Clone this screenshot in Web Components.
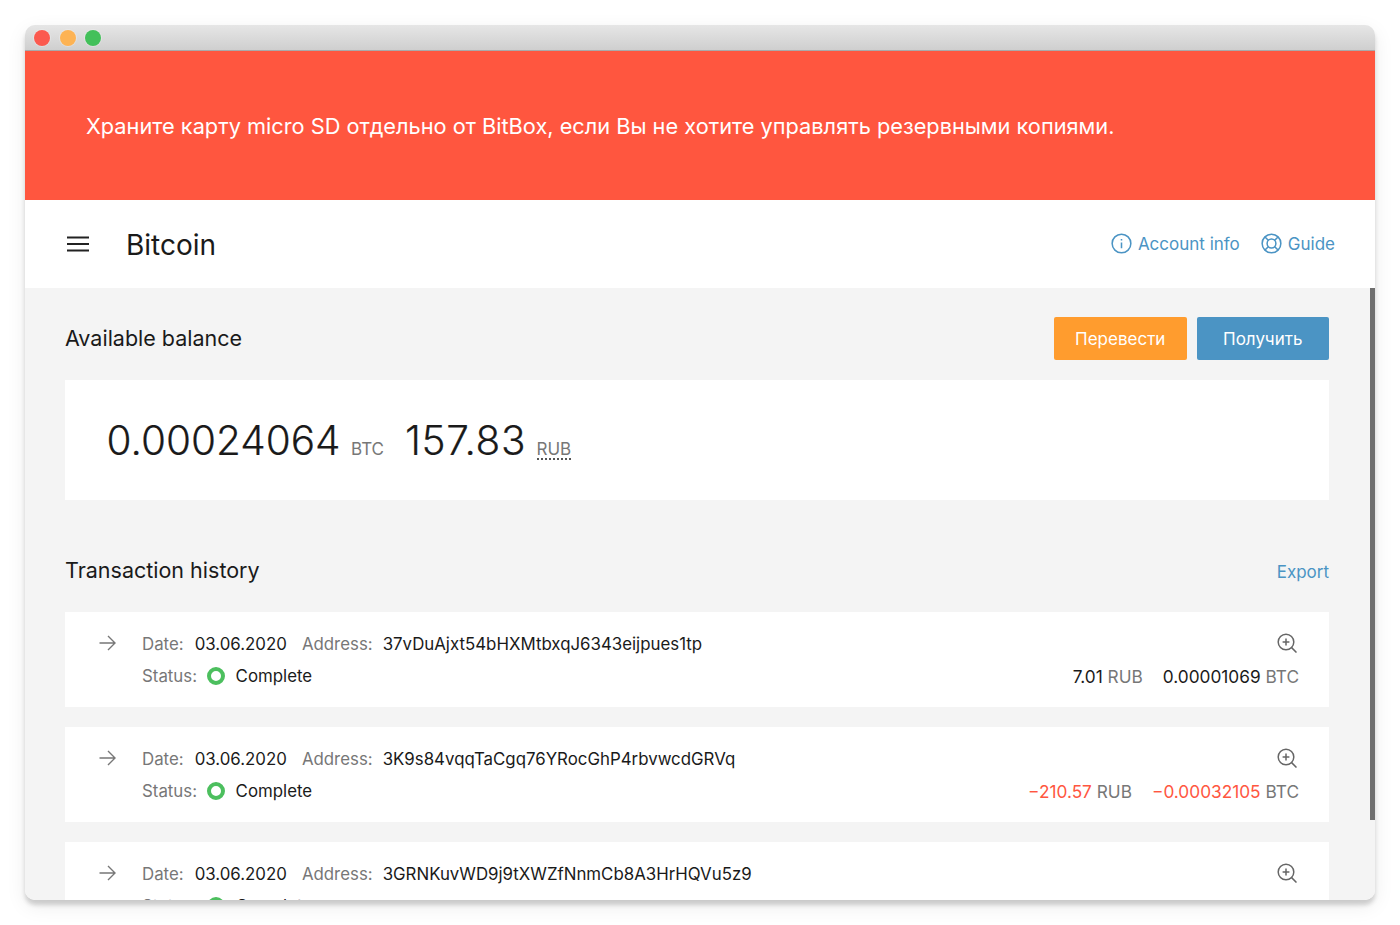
<!DOCTYPE html>
<html lang="ru">
<head>
<meta charset="utf-8">
<title>BitBox</title>
<style>
html, body { margin: 0; background: #fff; }
body { padding: 25px; height: 925px; box-sizing: border-box; overflow: hidden; font-family: Inter, "Liberation Sans", sans-serif; color: #1a1a1a; }
</style>
</head>
<body>
<mac-window>
   <alert-banner>Храните карту micro SD отдельно от BitBox, если Вы не хотите управлять резервными копиями.</alert-banner>
   <account-header title="Bitcoin"></account-header>
   <section-head title="Available balance">
      <action-button color="#ff9c2e">Перевести</action-button>
      <action-button color="#4b94c4">Получить</action-button>
   </section-head>
   <balance-card btc="0.00024064" fiat="157.83"></balance-card>
   <section-head class="history" title="Transaction history">
      <export-link>Export</export-link>
   </section-head>
   <tx-row address="37vDuAjxt54bHXMtbxqJ6343eijpues1tp" fiat="7.01" btc="0.00001069"></tx-row>
   <tx-row address="3K9s84vqqTaCgq76YRocGhP4rbvwcdGRVq" fiat="−210.57" btc="−0.00032105" negative></tx-row>
   <tx-row address="3GRNKuvWD9j9tXWZfNnmCb8A3HrHQVu5z9" fiat="+704.57" btc="+0.00072000"></tx-row>
</mac-window>

<script>
const templateWindow = document.createElement('template')
templateWindow.innerHTML = `
<style>
:host {
   display: block;
   width: 1350px;
   height: 875px;
   border-radius: 10px;
   box-shadow: 0 5px 4px rgb(0 0 0 / 0.16), 0 6px 20px rgb(0 0 0 / 0.08);
}
.frame {
   position: relative;
   height: 100%;
   border-radius: 10px;
   overflow: hidden;
   background: #f4f4f4;
}
.bar {
   height: 25px;
   border-bottom: 1px solid #a9a9a9;
   background: linear-gradient(#e6e6e6, #cfcfcf);
   display: flex;
   align-items: center;
   gap: 9.5px;
   padding: 0 0 0 9px;
}
.bar i { width: 16px; height: 16px; border-radius: 50%; box-shadow: 0 0 0 1px rgb(255 255 255 / 0.25); }
.scroll {
   position: absolute;
   top: 263px;
   right: 0;
   width: 5px;
   height: 532px;
   background: #6f6f6f;
}
</style>
<div class="frame">
   <div class="bar">
      <i style="background:#fb5a4f"></i>
      <i style="background:#fdb354"></i>
      <i style="background:#43c05a"></i>
   </div>
   <slot></slot>
   <div class="scroll"></div>
</div>
`

class MacWindow extends HTMLElement {
   constructor() {
      super()
      this.attachShadow({ mode: 'open' })
      this.shadowRoot.appendChild(templateWindow.content.cloneNode(true))
   }
}

class AlertBanner extends HTMLElement {
   constructor() {
      super()
      this.attachShadow({ mode: 'open' })
      this.shadowRoot.innerHTML = `
      <style>
      :host {
         display: flex;
         align-items: center;
         height: 149px;
         padding: 0 61px;
         background: #ff563f;
         color: #fff;
         font-size: 21.75px;
      }
      </style>
      <slot></slot>`
   }
}

class AccountHeader extends HTMLElement {
   constructor() {
      super()
      this.attachShadow({ mode: 'open' })
      this.shadowRoot.innerHTML = `
      <style>
      :host {
         display: flex;
         align-items: center;
         height: 88px;
         padding: 0 40px 1px 42px;
         box-sizing: border-box;
         background: #fff;
      }
      .menu { width: 22px; height: 16px; margin-right: 37px; display: block; }
      h1 { margin: 0 0 -2px; font-size: 28px; font-weight: 400; flex: 1; color: #1a1a1a; }
      a {
         display: flex;
         align-items: center;
         gap: 6px;
         margin-left: 21px;
         color: #4b94c4;
         font-size: 17px;
      }
      svg.ic { width: 21px; height: 21px; fill: none; stroke: #4b94c4; stroke-width: 1.6; }
      </style>
      <svg class="menu" viewBox="0 0 22 16"><path d="M0 1.5h22M0 8h22M0 14.5h22" stroke="#222" stroke-width="2"/></svg>
      <h1>${this.getAttribute('title')}</h1>
      <a>
         <svg class="ic" viewBox="0 0 22 22"><circle cx="11" cy="11" r="9.8"/><path d="M11 10v6" /><path d="M11 6.2v1.6"/></svg>
         Account info
      </a>
      <a>
         <svg class="ic" viewBox="0 0 22 22"><circle cx="11" cy="11" r="9.8"/><circle cx="11" cy="11" r="4.6"/><path d="M4.2 4.2l3.7 3.7M17.8 4.2l-3.7 3.7M4.2 17.8l3.7-3.7M17.8 17.8l-3.7-3.7"/></svg>
         Guide
      </a>`
   }
}

class SectionHead extends HTMLElement {
   constructor() {
      super()
      this.attachShadow({ mode: 'open' })
      this.shadowRoot.innerHTML = `
      <style>
      :host {
         display: flex;
         align-items: center;
         justify-content: space-between;
         padding: 29px 46px 20px 40px;
      }
      :host(.history) { padding: 49px 46px 20px 40px; }
      h2 { margin: 0; font-size: 21.5px; font-weight: 400; color: #1a1a1a; line-height: 43px; }
      div { display: flex; gap: 10px; }
      </style>
      <h2>${this.getAttribute('title')}</h2>
      <div><slot></slot></div>`
   }
}

class ActionButton extends HTMLElement {
   constructor() {
      super()
      this.attachShadow({ mode: 'open' })
      this.shadowRoot.innerHTML = `
      <style>
      :host {
         display: flex;
         align-items: center;
         justify-content: center;
         width: 132.5px;
         height: 43px;
         border-radius: 2px;
         color: #fff;
         font-size: 17px;
         background: ${this.getAttribute('color')};
      }
      </style>
      <slot></slot>`
   }
}

class ExportLink extends HTMLElement {
   constructor() {
      super()
      this.attachShadow({ mode: 'open' })
      this.shadowRoot.innerHTML = `
      <style>
      :host { display: block; color: #4b94c4; font-size: 17px; margin-top: 2px; }
      </style>
      <slot></slot>`
   }
}

class BalanceCard extends HTMLElement {
   constructor() {
      super()
      this.attachShadow({ mode: 'open' })
      this.shadowRoot.innerHTML = `
      <style>
      :host {
         display: flex;
         align-items: baseline;
         height: 120px;
         box-sizing: border-box;
         margin: 0 46px 0 40px;
         padding: 32px 41.5px 0;
         background: #fff;
         color: #1a1a1a;
      }
      b { font-weight: 300; font-size: 40.5px; line-height: 58px; -webkit-text-stroke: 0.2px #1a1a1a; }
      b.fiat { letter-spacing: 0.6px; }
      small { font-size: 17px; color: #777; margin: 0 21px 0 10.5px; }
      small.rub { border-bottom: 2px dotted #555; line-height: 18px; }
      </style>
      <b>${this.getAttribute('btc')}</b><small>BTC</small>
      <b class="fiat">${this.getAttribute('fiat')}</b><small class="rub">RUB</small>`
   }
}

const templateTx = document.createElement('template')
templateTx.innerHTML = `
<style>
:host {
   display: grid;
   grid-template-columns: 43px 1fr auto;
   grid-template-rows: 33px 32px;
   box-sizing: border-box;
   height: 95px;
   margin: 0 46px 20px 40px;
   padding: 15px 30px 0 34px;
   background: #fff;
   font-size: 16.85px;
   color: #1a1a1a;
   align-items: center;
}
.arrow { width: 17px; height: 16px; margin-bottom: 1px; fill: none; stroke: #777; stroke-width: 1.4; }
.line { display: flex; align-items: center; white-space: nowrap; }
.k { color: #777; margin-right: 11px; }
.v { margin-right: 15px; }
.addr { margin-left: -1px; }
.status { margin-right: 9.5px; }
.dot { width: 18px; height: 18px; box-sizing: border-box; border: 4px solid #4cbf5e; border-radius: 50%; margin-right: 11px; }
.zoom { justify-self: end; margin: 0 2px 2px 0; width: 20px; height: 20px; fill: none; stroke: #666; stroke-width: 1.5; }
.sum { grid-column: 3; justify-self: end; font-size: 17.25px; }
.sum span { color: #777; }
.sum em { font-style: normal; }
.sum .gap { display: inline-block; width: 20px; }
:host([negative]) em { color: #ff5640; }
</style>
<svg class="arrow" viewBox="0 0 17 16"><path d="M.5 8h15.5M9 1l7 7-7 7"/></svg>
<div class="line">
   <span class="k">Date:</span><span class="v date">03.06.2020</span>
   <span class="k">Address:</span><span class="addr"></span>
</div>
<svg class="zoom" viewBox="0 0 20 20"><circle cx="9" cy="9" r="7.8"/><path d="M14.6 14.6l4.9 4.9M9 5.6v6.8M5.6 9h6.8"/></svg>
<span></span>
<div class="line">
   <span class="k status">Status:</span><i class="dot"></i><span>Complete</span>
</div>
<div class="sum"><em class="fiat"></em> <span>RUB</span><i class="gap"></i><em class="btc"></em> <span>BTC</span></div>
`

class TxRow extends HTMLElement {
   constructor() {
      super()
      this.attachShadow({ mode: 'open' })
      this.shadowRoot.appendChild(templateTx.content.cloneNode(true))
   }

   connectedCallback() {
      this.shadowRoot.querySelector('.addr').textContent = this.getAttribute('address')
      this.shadowRoot.querySelector('.fiat').textContent = this.getAttribute('fiat')
      this.shadowRoot.querySelector('.btc').textContent = this.getAttribute('btc')
   }
}

customElements.define('mac-window', MacWindow)
customElements.define('alert-banner', AlertBanner)
customElements.define('account-header', AccountHeader)
customElements.define('section-head', SectionHead)
customElements.define('action-button', ActionButton)
customElements.define('export-link', ExportLink)
customElements.define('balance-card', BalanceCard)
customElements.define('tx-row', TxRow)
</script>
</body>
</html>
